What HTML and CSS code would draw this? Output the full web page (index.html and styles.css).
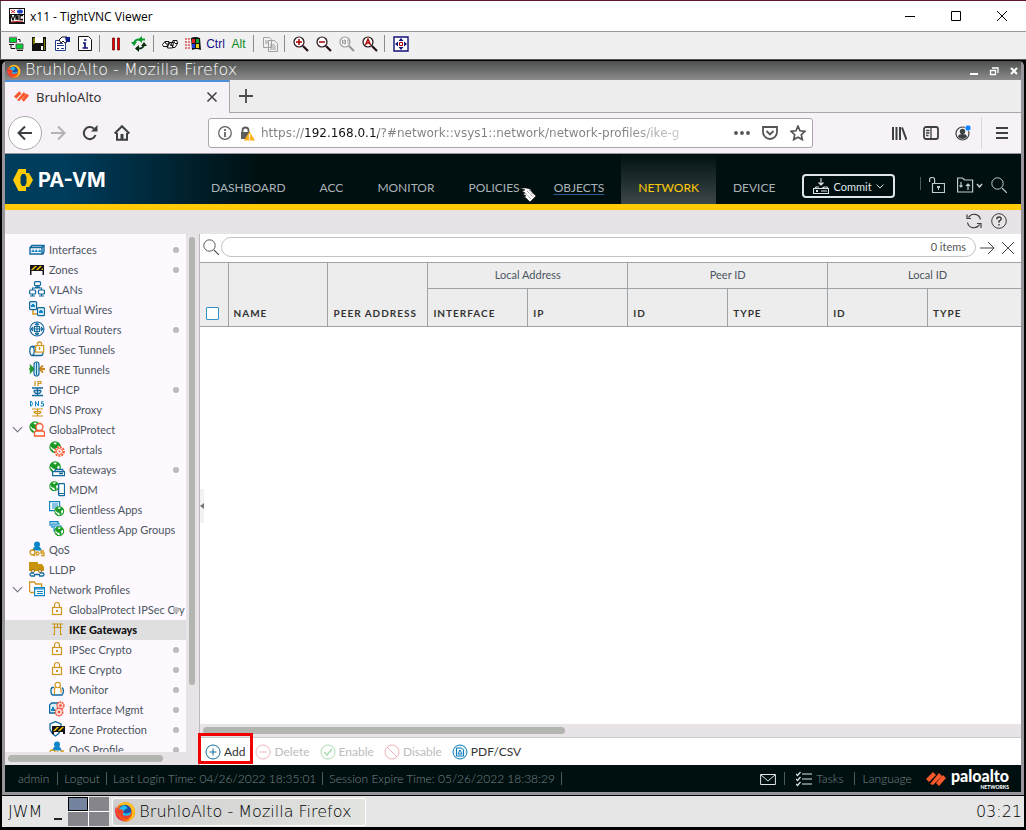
FILE: index.html
```html
<!DOCTYPE html>
<html lang="en">
<head>
<meta charset="utf-8">
<title>x11 - TightVNC Viewer</title>
<link rel="stylesheet" href="styles.css">
</head>
<body>
<svg class="defs" aria-hidden="true">
  <symbol id="firefox" viewBox="0 0 20 20"><circle cx="10" cy="10.500" r="9.200" fill="#f9690e"/><path d="M3 4q3-3 7-3 8 1 9 9 0 8-8 9 7-4 5-10-2-5-6-5-4 0-7 0z" fill="#ffc21c"/><circle cx="9.500" cy="9.500" r="6" fill="#1c4fa8"/><path d="M7 4q4 0 5 3-3 1-4 3 0 2 3 2 3 0 4-2 0 5-5 5-6 0-7-6 1-3 4-4z" fill="#20bcf0"/><path d="M1 6q2 2 5 2 3 1 2 3-2 3 2 3 3 0 5-1-1 5-7 4-6-3-7-11z" fill="#f0402a"/><path d="M1 5q-1 10 8 14-8 0-9-9 0-3 1-5z" fill="#e8304a"/></symbol>
  <symbol id="palo" viewBox="0 0 20 14"><g fill="#fa582d"><path d="M0 7 7 0l3 3-7 7zM4 12l9-11 3 3-9 9zM10 11l7-8 3 3-7 8z"/></g></symbol>
  <symbol id="globe" viewBox="0 0 16 16"><circle cx="7" cy="7" r="5.900" fill="#fff" stroke="#189a24" stroke-width="1.400"/><path d="M1.500 5Q3 1.500 6.500 1L5 3.500l3 .5 1-2.500q3 1 4 4L11 5 9 7.500l1.500 2L8 12.500 7 9 4 8.500z" fill="#189a24"/><path d="M2 9.500 4 11l1 2" stroke="#189a24" stroke-width="1.400" fill="none"/></symbol>
  <symbol id="lock" viewBox="0 0 16 16"><g fill="none" stroke="#d0981c" stroke-width="1.200"><rect x="3.500" y="6.500" width="9" height="7"/><path d="M5.500 6V4a2.500 2.500 0 0 1 5 0v2"/></g><path d="M7 9h2v2H7z" fill="#d0981c"/></symbol>
  <symbol id="ifc" viewBox="0 0 16 16"><path d="M1 13V6.500l2-2h12v6l-1 2.500zM1 6.500h12V13M13 6.500l2-2" fill="none" stroke="#106a9c" stroke-width="1.400"/><path d="M2.500 11h3V9.500h-1v-1h-1v1h-1zM6 11h2.500V9.500h-.700v-1h-1v1H6zM9.300 11h3V9.500h-1v-1h-1v1h-1z" fill="#0d85c6"/></symbol>
  <symbol id="zone" viewBox="0 0 16 16"><path d="M1 4h14v10h-1.500v-4h-11v4H1z" fill="#15151d"/><path d="M2 9l4-4h2L4 9zM7 9l4-4h2L9 9zM12 9l2-2v2z" fill="#ffcb06"/></symbol>
  <symbol id="vlan" viewBox="0 0 16 16"><g fill="none" stroke="#106a9c" stroke-width="1.200"><rect x="5.500" y=".6" width="6" height="4" rx="1"/><rect x=".6" y="9" width="6" height="4" rx="1"/><rect x="9.500" y="9" width="6" height="4" rx="1"/><path d="M6 6h5M8.500 5v2M3.500 9V7h9v2M1 15h5M10 15h5M3.500 13v2M12.500 13v2"/></g></symbol>
  <symbol id="vwire" viewBox="0 0 16 16"><path d="M4 9v4h7" fill="none" stroke="#d0981c" stroke-width="1.500"/><g fill="#d7edf8" stroke="#106a9c" stroke-width="1.200"><rect x=".6" y=".6" width="7" height="8" rx="1"/><rect x="8.500" y="6.600" width="7" height="8" rx="1"/></g><path d="M2 4h1V3h2v1h1v2H2zM10 10h1V9h2v1h1v2h-4z" fill="#0d85c6"/></symbol>
  <symbol id="router" viewBox="0 0 16 16"><g fill="none" stroke="#106a9c" stroke-width="1.100"><circle cx="8" cy="8" r="7"/><path d="M8 2v12M2 8h12M6 4l2-2 2 2M6 12l2 2 2-2M4 6 2 8l2 2M12 6l2 2-2 2M5.500 5.500h5v5h-5z"/></g></symbol>
  <symbol id="ipsec" viewBox="0 0 16 16"><g fill="none" stroke="#106a9c" stroke-width="1.300"><ellipse cx="3" cy="10" rx="2.200" ry="4.500"/><path d="M3 14.500h9q2 0 2-3M3 5.500h3"/></g><rect x="6.600" y="4.600" width="8" height="6.500" fill="#fff" stroke="#d0981c" stroke-width="1.200"/><path d="M8.500 4V2q2-2 4 0v2M10.500 6v3M9.500 7h2" fill="none" stroke="#d0981c" stroke-width="1.200"/></symbol>
  <symbol id="gre" viewBox="0 0 16 16"><path d="M0 8h3M1.500 4.500 5 8l-3.500 3.500z" stroke="#2d9b33" stroke-width="1.400" fill="#2d9b33"/><path d="M11 8h5M14 4.500 10.500 8l3.500 3.500" stroke="#c88a20" stroke-width="1.800" fill="none"/><rect x="5" y="1" width="5" height="14" rx="2.500" fill="#c9e6f5" stroke="#106a9c" stroke-width="1.200"/><path d="M7.500 2v12" stroke="#106a9c"/></symbol>
  <symbol id="dhcp" viewBox="0 0 16 16"><path d="M6 0v5M9 5V.500h3v2H9" stroke="#d0981c" stroke-width="1.200" fill="none"/><path d="M3 7h11M5 9.500h7M8.500 7v7M3 14.500h11M5 9.500q0 3 3.500 3t3.500-3" stroke="#106a9c" stroke-width="1.300" fill="none"/></symbol>
  <symbol id="dns" viewBox="0 0 16 16"><path d="M1.500 0v5h1q2-2.500 0-4.500zM6.500 5.500V.500l3 4.500V0M14.500.700h-2v2h2v2.300h-3" stroke="#0d85c6" fill="none"/><path d="M3 8h11M5 10.500h7M8.500 8v7M3 15h11M5 10.500q0 2 3.500 2t3.500-2" stroke="#d0981c" stroke-width="1.200" fill="none"/></symbol>
  <symbol id="gp" viewBox="0 0 16 16"><use href="#globe" width="14" height="14"/><g fill="#fff" stroke="#fa582d" stroke-width="1.300"><path d="M5.500 15v-3q0-2 2-2h6q2 0 2 2v3z"/><circle cx="10.500" cy="6" r="3.500"/></g></symbol>
  <symbol id="portal" viewBox="0 0 16 16"><use href="#globe" width="14" height="14"/><circle cx="10.500" cy="10.500" r="4.500" fill="#fff" stroke="#fa582d" stroke-width="1.700" stroke-dasharray="2 1"/><circle cx="10.500" cy="10.500" r="3" fill="none" stroke="#fa582d"/><circle cx="10.500" cy="10.500" r="1" fill="#fa582d"/></symbol>
  <symbol id="gateway" viewBox="0 0 16 16"><use href="#globe" width="14" height="14"/><path d="M3.600 10.600h12v4h-12zM5.500 10.500l1-2h7l1 2M10 12.500h4" fill="#fff" stroke="#106a9c" stroke-width="1.300"/></symbol>
  <symbol id="mdm" viewBox="0 0 16 16"><use href="#globe" width="12" height="12"/><rect x="9.600" y="2.600" width="6" height="12" rx="1" fill="#fff" stroke="#106a9c" stroke-width="1.400"/><path d="M10 12.500h5" stroke="#106a9c"/></symbol>
  <symbol id="capps" viewBox="0 0 16 16"><path d="M.600.600h10v9h-10zM3 3h6M3 5h6M3 7h6" fill="#fff" stroke="#0d85c6" stroke-width="1.200"/><use href="#globe" x="5" y="5" width="12" height="12"/></symbol>
  <symbol id="cgroups" viewBox="0 0 16 16"><path d="M1 5V.600h8V3M3 7V3h8M5 5h7v5H5z" fill="#d7edf8" stroke="#0d85c6" stroke-width="1.200"/><use href="#globe" x="5" y="5" width="12" height="12"/></symbol>
  <symbol id="qos" viewBox="0 0 16 16"><circle cx="8" cy="3.500" r="3" fill="#0d85c6"/><path d="M5 6h6l2 3.500H3z" fill="#0d85c6"/><g fill="none" stroke="#d0981c" stroke-width="1.300"><circle cx="3.500" cy="11.500" r="2.500"/><circle cx="8.500" cy="12.500" r="1.500"/><path d="m4 13 2 2M15 10h-3v2h3v2.500h-3"/></g></symbol>
  <symbol id="lldp" viewBox="0 0 16 16"><path d="M0 1h9v2h4l2 3v4H0z" fill="#c8930d"/><g fill="#fff" stroke="#9a6b00"><circle cx="4" cy="10" r="1.500"/><circle cx="11" cy="10" r="1.500"/></g><path d="M5 12H2q-2 1.500 0 3h4M11 12h3q2 1.500 0 3h-4M5 13.500h6" fill="none" stroke="#106a9c" stroke-width="1.300"/></symbol>
  <symbol id="profiles" viewBox="0 0 16 16"><path d="M.600 11V1h5l1 2h6v3M1 11.500h4" fill="none" stroke="#d0981c" stroke-width="1.300"/><path d="M5.600 6.600h10v8h-10zM6 8h9M8 10.500h6M8 12.500h6" fill="#fff" stroke="#0d85c6" stroke-width="1.200"/></symbol>
  <symbol id="torii" viewBox="0 0 16 16"><path d="M3 3h11M4 6.500h9M5.500 3v11M11.500 3v11M4 13.500h2M11 13.500h2M8.500 3v3" fill="none" stroke="#c8930d"/></symbol>
  <symbol id="monitor" viewBox="0 0 16 16"><path d="M5 6.500H3.500Q2 6.500 2 10t1.500 4H13q1.500-2 1.500-4T13 6.500" fill="none" stroke="#106a9c" stroke-width="1.300"/><path d="M5.500 13V8.500Q5.500 6 8 6h1.500Q12 6 12 8.500V12" fill="#fff" stroke="#d0981c" stroke-width="1.200"/><circle cx="8.700" cy="4" r="2.700" fill="#fff" stroke="#d0981c" stroke-width="1.200"/></symbol>
  <symbol id="imgmt" viewBox="0 0 16 16"><path d="M.600 12V4l2-2h7v10z" fill="#d7edf8" stroke="#106a9c" stroke-width="1.300"/><path d="M2 8h1V6h2v2h1v2H2z" fill="#0d85c6"/><g fill="#ffd9d0" stroke="#f0513c" stroke-width="1.300" stroke-dasharray="2 .5"><circle cx="11.500" cy="4.500" r="3.500"/><circle cx="10" cy="11" r="3.800"/></g><circle cx="11.500" cy="4.500" r="1.300" fill="#f0513c"/><circle cx="10" cy="11" r="1.300" fill="#f0513c"/></symbol>
  <symbol id="zprot" viewBox="0 0 16 16"><path d="M6.500.600 1 3v5q1 4 5.500 7Q11 12 12 8V3z" fill="#fff" stroke="#106a9c" stroke-width="1.300"/><path d="M3 5h13v8h-2v-2H5v2H3z" fill="#15151d"/><path d="M4 10l4-4h2l-4 4zM9 10l4-4h2l-4 4z" fill="#ffcb06"/></symbol>
  <symbol id="search" viewBox="0 0 16 16"><circle cx="6.500" cy="6.500" r="5.700" fill="none" stroke="currentColor"/><path d="m11 11 5 5" stroke="currentColor" stroke-width="1.200"/></symbol>
  <symbol id="mag" viewBox="0 0 16 16"><circle cx="6" cy="6" r="5" fill="#fff" stroke="currentColor" stroke-width="1.200"/><path d="m10 10 5 5" stroke="currentColor" stroke-width="2.200"/></symbol>
</svg>

<header class="vnc-title">
  <svg class="vnc-logo" viewBox="0 0 16 16"><path d="M0 0h16v16H0z" fill="#111"/><path d="M1 1h14v5H1zM2 7h13v7H2z" fill="#fff"/><path d="m2 2 4 3M6 2 2 5M2 14l12-1" stroke="#d02020"/><ellipse cx="11" cy="3.500" rx="3" ry="2" fill="#2040c0"/><path d="m2 7 2 5 2-5M7 12V7l2 5V7M14 7.500h-3v4h3" stroke="#111" fill="none" stroke-width="1.300"/></svg>
  <h1>x11 - TightVNC Viewer</h1>
  <div class="win-buttons">
    <button aria-label="Minimize"><svg viewBox="0 0 12 12"><path d="M1 6.500h10" stroke="#000"/></svg></button>
    <button aria-label="Maximize"><svg viewBox="0 0 12 12"><path d="M1.500 1.500h9v9h-9z" stroke="#000" fill="none"/></svg></button>
    <button aria-label="Close"><svg viewBox="0 0 12 12"><path d="m1 1 10 10M11 1 1 11" stroke="#000"/></svg></button>
  </div>
</header>

<div class="vnc-tools" role="toolbar">
  <button aria-label="New connection"><svg viewBox="0 0 16 16"><path d="M1.500 1.500h7v5h-7zM8 8h7v5H8z" fill="#00d030" stroke="#555"/><path d="M1 1h8M8 7.500h7" stroke="#aaa"/><path d="M3 8.500v4h4M12 6V3.500h-2M1 8.500h5M9 14.500h6" stroke="#111" fill="none"/></svg></button>
  <button aria-label="Save"><svg viewBox="0 0 16 16"><path d="M1 1h14v14H1z" fill="#111"/><path d="M2 2h2v6H2z" fill="#808000"/><path d="M4 1h8v6H4zM10 10h2v4h-2z" fill="#fff"/><path d="M13 3h1v11h-1z" fill="#808000"/></svg></button>
  <button aria-label="Options"><svg viewBox="0 0 16 16"><path d="M1.500 4.500h10v10h-10z" fill="#fff" stroke="#223a8a"/><path d="M3 7.500h6M3 9.500h7M3 12.500h2M7 12.500h3" stroke="#223a8a"/><path d="m5 4 3-3h5v5l-2 1-2-2-2 2z" fill="#fff" stroke="#111"/><path d="M11 1h5v5h-4z" fill="#10228a"/></svg></button>
  <button aria-label="Connection info"><svg viewBox="0 0 16 16"><path d="M1.500.500h10l3 3v11h-13z" fill="#fff" stroke="#111"/><path d="M6 7h2v4.500M5.500 12h5.500M7 4h2.500" stroke="#10107a" stroke-width="1.700" fill="none"/></svg></button>
  <i class="sep"></i>
  <button aria-label="Pause"><svg viewBox="0 0 16 16"><path d="M4.500 2h2v12h-2zM9.500 2h2v12h-2z" fill="#e80000" stroke="#600" stroke-width=".7"/></svg></button>
  <button aria-label="Refresh"><svg viewBox="0 0 16 16"><path d="M3 7q1-3.500 5-3.500h6" stroke="#0a9a30" stroke-width="1.800" fill="none"/><path d="M0 6h6L3 10zM11 0 7 3.500 11 7z" fill="#0a9a30"/><path d="M13 9q-1 3.500-5 3.500H5" stroke="#063010" stroke-width="1.800" fill="none"/><path d="M16 10h-6l3-4zM8 9l-4 3.500L8 16z" fill="#063010"/></svg></button>
  <i class="sep"></i>
  <button aria-label="Ctrl-Alt-Del"><svg viewBox="0 0 16 16"><path d="M.500 8.500 3 5.500h4l-1 5H1.500zM5 10l2.500-3.500h4L10.500 12h-5zM9.500 8 11 4.500h4l.500 3-2.500 4h-2z" fill="#fff" stroke="#111"/><path d="m3 5.500 1 2.500h2M7.500 6.500l1 3h2.500M11.500 4.500l1.500 3h2.500" stroke="#111" fill="none"/></svg></button>
  <button aria-label="Ctrl-Esc"><svg viewBox="0 0 16 16"><path d="M0 3h5M0 6h5M0 9h5M0 12h5" stroke="#c00" stroke-dasharray="2 1"/><path d="M6 2q4-2 9 0l1 12q-5-2-9 0z" fill="#111"/><path d="M7 3h3v4H7z" fill="#e02020"/><path d="M11 3h3v4h-3z" fill="#18a030"/><path d="M7 8h3v4H7z" fill="#2040e0"/><path d="M11 8h3v4h-3z" fill="#e8d020"/></svg></button>
  <button class="key ctrl">Ctrl</button>
  <button class="key alt">Alt</button>
  <i class="sep"></i>
  <button aria-label="Transfer files"><svg viewBox="0 0 16 16"><path d="M1.500 1.500h6l2 2v8h-8zM6.500 4.500h6l3 3v8h-9zM8 9h5M8 11h6M8 13h6M3 5h3M3 7h3" fill="none" stroke="#a0a0a0"/></svg></button>
  <i class="sep"></i>
  <button aria-label="Zoom in"><svg class="wine" viewBox="0 0 16 16"><use href="#mag"/><path d="M3 6h6M6 3v6" stroke="#a00" stroke-width="1.500"/></svg></button>
  <button aria-label="Zoom out"><svg class="wine" viewBox="0 0 16 16"><use href="#mag"/><path d="M3 6h6" stroke="#a00" stroke-width="1.500"/></svg></button>
  <button aria-label="Zoom 100%"><svg class="off" viewBox="0 0 16 16"><use href="#mag"/><path d="M3.500 4v4M5 4h1.500v4H5zM8 4h1v4" stroke="#999" fill="none"/></svg></button>
  <button aria-label="Auto scale"><svg class="wine" viewBox="0 0 16 16"><use href="#mag"/><path d="m3.500 9 2.500-6 2.500 6M4.500 7h3" stroke="#a00" stroke-width="1.400" fill="none"/></svg></button>
  <i class="sep"></i>
  <button aria-label="Full screen"><svg viewBox="0 0 16 16"><path d="M1 1h14v14H1z" fill="#fff" stroke="#10107a" stroke-width="1.400"/><path d="M8 2 5.500 5h5zM8 14l-2.500-3h5zM2 8l3-2.500v5zM14 8l-3-2.500v5z" fill="#10107a"/><path d="M6.500 6.500h3v3h-3z" fill="#fff" stroke="#a00"/></svg></button>
</div>

<div class="desktop">
  <section class="firefox">
    <header class="ff-title">
      <svg class="ff-logo"><use href="#firefox"/></svg>
      <h2>BruhloAlto - Mozilla Firefox</h2>
      <div class="ff-buttons">
        <button aria-label="Minimize"><svg viewBox="0 0 10 10"><path d="M1 8h8" stroke="#fff" stroke-width="2"/></svg></button>
        <button aria-label="Restore"><svg viewBox="0 0 10 10"><path d="M1.500 4.500h5v4h-5zM3 2h6v5" stroke="#fff" stroke-width="1.300" fill="none"/></svg></button>
        <button aria-label="Close"><svg viewBox="0 0 10 10"><path d="m2 2 6 6M8 2 2 8" stroke="#fff" stroke-width="2"/></svg></button>
      </div>
    </header>

    <div class="tabs">
      <div class="tab">
        <svg class="fav"><use href="#palo"/></svg>
        <span>BruhloAlto</span>
        <button aria-label="Close tab"><svg viewBox="0 0 12 12"><path d="m1.500 1.500 9 9M10.500 1.500l-9 9" stroke="#444" stroke-width="1.600"/></svg></button>
      </div>
      <button class="newtab" aria-label="New tab"><svg viewBox="0 0 14 14"><path d="M7 0v14M0 7h14" stroke="#4a4a4a" stroke-width="1.800"/></svg></button>
    </div>

    <div class="ff-nav">
      <div class="nav-left">
        <button class="back" aria-label="Back"><svg viewBox="0 0 16 16"><path d="M15 8H2M8 1.500 1.500 8 8 14.500" fill="none" stroke="#3c4043" stroke-width="2"/></svg></button>
        <button aria-label="Forward"><svg viewBox="0 0 16 16"><path d="M1 8h13M8 1.500 14.500 8 8 14.500" fill="none" stroke="#b5b2b5" stroke-width="2"/></svg></button>
        <button aria-label="Reload"><svg viewBox="0 0 16 16"><path d="M13.500 10A6 6 0 1 1 12 3.800" fill="none" stroke="#3c4043" stroke-width="2"/><path d="M9 6.500h6.500V0z" fill="#3c4043"/></svg></button>
        <button aria-label="Home"><svg viewBox="0 0 16 16"><path d="M.700 8.500 8 1.200l7.300 7.300M3 8v6.800h10V8" fill="none" stroke="#3c4043" stroke-width="2"/><path d="M6.500 15V9h3v6z" fill="#3c4043"/></svg></button>
      </div>
      <div class="urlbar">
        <svg viewBox="0 0 14 14"><circle cx="7" cy="7" r="6.300" fill="none" stroke="#5c5c5c" stroke-width="1.200"/><path d="M7 6v5M7 3v2" stroke="#5c5c5c" stroke-width="1.700"/></svg>
        <svg class="warn" viewBox="0 0 15 15"><path d="M2.500 7V4.500a3 3 0 0 1 6 0V7" fill="none" stroke="#5c5c5c" stroke-width="1.800"/><path d="M1 6h9v7H1z" fill="#5c5c5c"/><path d="m9.500 5.500 5.500 9H4z" fill="#ffae17"/><path d="M9.500 8v3.500M9.500 12.300v1.400" stroke="#fff" stroke-width="1.300"/></svg>
        <input class="url" type="text" aria-label="Address" value="https://192.168.0.1/?#network::vsys1::network/network-profiles/ike-g">
        <button aria-label="Page actions"><svg viewBox="0 0 16 16"><g fill="#555"><circle cx="2" cy="8" r="1.900"/><circle cx="8" cy="8" r="1.900"/><circle cx="14" cy="8" r="1.900"/></g></svg></button>
        <button aria-label="Save to Pocket"><svg viewBox="0 0 16 16"><path d="M1 2h14v5a7 7 0 0 1-14 0zM4.500 6 8 9.500 11.500 6" fill="none" stroke="#555" stroke-width="1.800"/></svg></button>
        <button aria-label="Bookmark"><svg viewBox="0 0 16 16"><path d="m8 1.200 2 4.600 5 .5-3.700 3.400 1 4.900L8 12.200l-4.300 2.400 1-4.900L1 6.300l5-.5z" fill="none" stroke="#555" stroke-width="1.700"/></svg></button>
      </div>
      <div class="nav-right">
        <button aria-label="Library"><svg viewBox="0 0 16 16"><path d="M2 2v13M5.500 2v13M9 2v13M11 2.500l4.500 12.300" stroke="#3c4043" stroke-width="2"/></svg></button>
        <button aria-label="Sidebars"><svg viewBox="0 0 16 16"><rect x="1" y="2" width="14" height="12" rx="2" fill="none" stroke="#3c4043" stroke-width="1.800"/><path d="M8 2v12M3 5.500h3.500M3 8h3.500M3 10.500h2.500" stroke="#3c4043" stroke-width="1.300"/></svg></button>
        <button aria-label="Account"><svg viewBox="0 0 16 16"><circle cx="7.500" cy="8.500" r="6.500" fill="none" stroke="#3c4043" stroke-width="1.200"/><circle cx="7.500" cy="6.500" r="2.700" fill="#3c4043"/><path d="M3 12q0-3 4.500-3T12 12q-4.500 4-9 0z" fill="#3c4043"/><circle cx="13" cy="3" r="3" fill="#0a84ff" stroke="#f6f2f6" stroke-width=".7"/></svg></button>
        <button class="menu" aria-label="Menu"><svg viewBox="0 0 16 16"><path d="M2 3h12M2 8h12M2 13h12" stroke="#3c4043" stroke-width="2"/></svg></button>
      </div>
    </div>

    <div class="pan">
      <header class="pan-head">
        <div class="brand">
          <svg viewBox="0 0 20 22"><path fill-rule="evenodd" d="M5.500 0H13v4h3l4 7-4 7h-3v4H5.500L0 11zM9 5 7.500 8v6L9 17h3l1.500-3V8L12 5z" fill="#ffcb06"/></svg>
          <strong>PA-VM</strong>
        </div>
        <nav class="pan-nav">
          <a href="#dashboard">DASHBOARD</a><a href="#acc">ACC</a><a href="#monitor">MONITOR</a>
          <a href="#policies">POLICIES<svg class="pointer" viewBox="0 0 16 16"><path d="m0 2 6 0 4 1 2 3 4 4-6 6-4-4-2-1 2-1-3-2 2-1-3-2 3-1z" fill="#fff" stroke="#111" stroke-width=".6"/><path d="m7 5 6 6M5 7l6 6M9 4l5 6" stroke="#333" stroke-width=".7" stroke-dasharray="1 1"/></svg></a>
          <a class="hover" href="#objects">OBJECTS</a><a class="on" href="#network">NETWORK</a><a href="#device">DEVICE</a>
        </nav>
        <button class="commit"><svg viewBox="0 0 16 16"><path d="M8 0v7M5.500 4.500 8 7l2.500-2.500M.500 10.500h15v5H.500zM2 10.500 3 9h3M9 10.500l2-1.500h3l1 1.500M8 13h6" fill="none" stroke="#dfe5e8" stroke-width="1.100"/><path d="M3 12h2v2H3z" fill="#dfe5e8"/></svg>Commit<svg class="caret" viewBox="0 0 8 5"><path d="m.500.500 3.500 3.500 3.500-3.500" fill="none" stroke="#dfe5e8"/></svg></button>
        <div class="head-tools">
          <i class="bar"></i>
          <button aria-label="Locks"><svg viewBox="0 0 16 16"><path d="M3.500 6.500h12v9h-12zM.600 5V2.500q0-2 2.500-2t2.500 2v4" fill="none" stroke="#c3cacd" stroke-width="1.200"/><path d="M8 9h3v2H8zM9 11h1v2H9z" fill="#c3cacd"/></svg></button>
          <button class="wide" aria-label="Configuration"><svg viewBox="0 0 26 16"><path d="M.600 15V1h5l2 2h8v12zM4 5v5M2.500 8.500 4 10l1.500-1.500M11 13V7M9 9l2-2 2 2" fill="none" stroke="#c3cacd" stroke-width="1.200"/><path d="m20 7 2.500 3L25 7" fill="none" stroke="#c3cacd" stroke-width="1.600"/></svg></button>
          <button class="find" aria-label="Search"><svg><use href="#search"/></svg></button>
        </div>
      </header>

      <div class="pan-band">
        <button aria-label="Refresh"><svg viewBox="0 0 16 16"><path d="M1.500 9.500a6.500 6.500 0 0 0 12 2M14.500 6.500a6.500 6.500 0 0 0-12-2M1 1.500v4h4M15 15v-4.500h-4" fill="none" stroke="#3b3b3b" stroke-width="1.200"/></svg></button>
        <button aria-label="Help"><svg viewBox="0 0 16 16"><circle cx="8" cy="8" r="7.300" fill="none" stroke="#3b3b3b"/><path d="M5.800 6.200q0-2.200 2.200-2.200t2.200 2Q10.200 7.200 8 8.200v1.500M8 11v1.500" fill="none" stroke="#3b3b3b" stroke-width="1.400"/></svg></button>
      </div>

      <div class="work">
        <aside class="side">
          <div class="tree-wrap">
            <ul class="tree">
              <li class="dot"><a href="#interfaces"><svg><use href="#ifc"/></svg>Interfaces</a></li>
              <li class="dot"><a href="#zones"><svg><use href="#zone"/></svg>Zones</a></li>
              <li><a href="#vlans"><svg><use href="#vlan"/></svg>VLANs</a></li>
              <li><a href="#virtual-wires"><svg><use href="#vwire"/></svg>Virtual Wires</a></li>
              <li class="dot"><a href="#virtual-routers"><svg><use href="#router"/></svg>Virtual Routers</a></li>
              <li><a href="#ipsec-tunnels"><svg><use href="#ipsec"/></svg>IPSec Tunnels</a></li>
              <li><a href="#gre-tunnels"><svg><use href="#gre"/></svg>GRE Tunnels</a></li>
              <li class="dot"><a href="#dhcp-servers"><svg><use href="#dhcp"/></svg>DHCP</a></li>
              <li><a href="#dns-proxy"><svg><use href="#dns"/></svg>DNS Proxy</a></li>
              <li class="open"><a href="#globalprotect"><svg><use href="#gp"/></svg>GlobalProtect</a></li>
              <li class="sub"><a href="#portals"><svg><use href="#portal"/></svg>Portals</a></li>
              <li class="sub dot"><a href="#gateways"><svg><use href="#gateway"/></svg>Gateways</a></li>
              <li class="sub"><a href="#mdm-servers"><svg><use href="#mdm"/></svg>MDM</a></li>
              <li class="sub"><a href="#clientless-apps"><svg><use href="#capps"/></svg>Clientless Apps</a></li>
              <li class="sub"><a href="#clientless-app-groups"><svg><use href="#cgroups"/></svg>Clientless App Groups</a></li>
              <li><a href="#qos-interfaces"><svg><use href="#qos"/></svg>QoS</a></li>
              <li><a href="#lldp-settings"><svg><use href="#lldp"/></svg>LLDP</a></li>
              <li class="open"><a href="#network-profiles"><svg><use href="#profiles"/></svg>Network Profiles</a></li>
              <li class="sub dot"><a href="#gp-ipsec-crypto"><svg><use href="#lock"/></svg>GlobalProtect IPSec Cry</a></li>
              <li class="sub current"><a href="#ike-gateways"><svg><use href="#torii"/></svg>IKE Gateways</a></li>
              <li class="sub dot"><a href="#ipsec-crypto"><svg><use href="#lock"/></svg>IPSec Crypto</a></li>
              <li class="sub dot"><a href="#ike-crypto"><svg><use href="#lock"/></svg>IKE Crypto</a></li>
              <li class="sub dot"><a href="#monitor-profiles"><svg><use href="#monitor"/></svg>Monitor</a></li>
              <li class="sub dot"><a href="#interface-mgmt"><svg><use href="#imgmt"/></svg>Interface Mgmt</a></li>
              <li class="sub dot"><a href="#zone-protection"><svg><use href="#zprot"/></svg>Zone Protection</a></li>
              <li class="sub dot"><a href="#qos-profile"><svg><use href="#qos"/></svg>QoS Profile</a></li>
            </ul>
            <div class="vtrack"><div class="vthumb"></div></div>
          </div>
          <div class="htrack"><div class="hthumb"></div></div>
        </aside>

        <main class="main">
          <button class="collapse" aria-label="Collapse sidebar"></button>
          <div class="filter">
            <svg><use href="#search"/></svg>
            <div class="filter-box"><input type="text" aria-label="Filter"><span>0 items</span></div>
            <button aria-label="Apply filter"><svg viewBox="0 0 16 16"><path d="M1 9h14M9 3l6 6-6 6" fill="none" stroke="#444"/></svg></button>
            <button aria-label="Clear filter"><svg viewBox="0 0 16 16"><path d="m2 3 12 12M14 3 2 15" fill="none" stroke="#444"/></svg></button>
          </div>
          <div class="grid">
            <table>
              <colgroup><col class="c-check"><col span="8"></colgroup>
              <thead>
                <tr><th rowspan="2" class="check"><input type="checkbox" aria-label="Select all"></th><th rowspan="2">NAME</th><th rowspan="2">PEER ADDRESS</th><th colspan="2" class="group">Local Address</th><th colspan="2" class="group">Peer ID</th><th colspan="2" class="group">Local ID</th></tr>
                <tr><th>INTERFACE</th><th>IP</th><th>ID</th><th>TYPE</th><th>ID</th><th>TYPE</th></tr>
              </thead>
            </table>
          </div>
          <div class="gtrack"><div class="gthumb"></div></div>
          <div class="actions">
            <button class="add"><svg viewBox="0 0 16 16"><circle cx="8" cy="8" r="7" fill="none" stroke="#106a9c"/><path d="M8 4.500v7M4.500 8h7" stroke="#106a9c"/></svg>Add</button>
            <button disabled><svg viewBox="0 0 16 16"><circle cx="8" cy="8" r="7" fill="none" stroke="#f3b4ba"/><path d="M4.500 8h7" stroke="#f3b4ba"/></svg>Delete</button>
            <button disabled><svg viewBox="0 0 16 16"><circle cx="8" cy="8" r="7" fill="none" stroke="#a9dcb0"/><path d="m4.500 8 2.500 3 5-6" stroke="#a9dcb0" stroke-width="1.500" fill="none"/></svg>Enable</button>
            <button disabled><svg viewBox="0 0 16 16"><circle cx="8" cy="8" r="7" fill="none" stroke="#f3b4ba"/><path d="m3 3 10 10" stroke="#f3b4ba"/></svg>Disable</button>
            <button><svg viewBox="0 0 16 16"><circle cx="8" cy="8" r="7" fill="#e6f3fa" stroke="#0d7ab5"/><path d="M4.500 4h5l2 2v6h-7zM6 10l2-4 2 4z" fill="none" stroke="#0d7ab5"/></svg>PDF/CSV</button>
          </div>
        </main>
      </div>

      <footer class="pan-foot">
        <span class="user">admin</span><a href="#logout">Logout</a><span>Last Login Time: 04/26/2022 18:35:01</span><span class="last">Session Expire Time: 05/26/2022 18:38:29</span>
        <div class="foot-right">
          <button aria-label="Messages"><svg viewBox="0 0 16 16"><path d="M.600 3.500h14.800v10H.600zM1 4l7 6 7-6" fill="none" stroke="#dfe5e8"/></svg></button>
          <i class="bar"></i>
          <button class="tasks"><svg viewBox="0 0 16 16"><path d="M6 3h10M6 8h10M6 13h10M0 3l1.500 1.500L4.500 1M0 8l1.500 1.500L4.500 6M0 13l1.500 1.500L4.500 11" fill="none" stroke="#dfe5e8" stroke-width="1.200"/></svg>Tasks</button>
          <i class="bar"></i>
          <a href="#language">Language</a>
          <div class="palo"><svg><use href="#palo"/></svg><div><b>paloalto</b><small>NETWORKS</small></div></div>
        </div>
      </footer>
    </div>
  </section>

  <footer class="taskbar">
    <button class="jwm">JWM</button>
    <button class="showdesk" aria-label="Show desktop"></button>
    <div class="pager"><i class="here"></i><i></i><i></i><i></i></div>
    <button class="task"><svg><use href="#firefox"/></svg>BruhloAlto - Mozilla Firefox</button>
    <time>03:21</time>
  </footer>
</div>
</body>
</html>
```

FILE: styles.css
```css
* { box-sizing: border-box; }
body {
  margin: 0;
  height: 100vh;
  display: flex;
  flex-direction: column;
  overflow: hidden;
  border-top: 1px solid #5c1630;
  background: #222;
  font-family: Lato, "Open Sans", sans-serif;
  font-size: 11px;
}
button { border: 0; padding: 0; margin: 0; background: none; font: inherit; color: inherit; display: flex; align-items: center; justify-content: center; flex: none; }
svg { width: 16px; height: 16px; flex: none; display: block; }
a { color: inherit; text-decoration: none; }
h1, h2 { margin: 0; font-weight: 400; }
.defs { position: absolute; width: 0; height: 0; }

/* viewer window */
.vnc-title { height: 30px; flex: none; display: flex; align-items: center; padding: 0 1px 0 8px; background: #fff; border-left: 1px solid #555; }
.vnc-title h1 { flex: 1; margin-left: 5px; font: 12px "Open Sans", sans-serif; color: #000; }
.win-buttons { display: flex; }
.win-buttons button { width: 46px; height: 28px; }
.win-buttons svg { width: 12px; height: 12px; }
.vnc-tools { height: 29px; flex: none; display: flex; align-items: center; padding: 0 0 4px 3px; background: #f0f0f0; border-top: 1px solid #999; border-left: 1px solid #555; border-bottom: 1px solid #555; }
.vnc-tools button { width: 23px; height: 22px; }
.sep { width: 1px; height: 17px; margin: 0 4px 0 3px; background: #8c8c8c; }
.vnc-tools .key { font: 12px "Liberation Sans", sans-serif; color: #10108c; }
.vnc-tools .alt { color: #0a8a1e; }
.wine { color: #251018; }
.off { color: #999; }

.desktop { flex: 1; min-height: 0; display: flex; flex-direction: column; padding: 1px 2px 3px 2px; background: #000; }
.firefox { flex: 1; min-height: 0; display: flex; flex-direction: column; border: solid #98959a; border-width: 0 3px 3px 3px; border-radius: 5px 5px 0 0; margin-bottom: 1px; background: #98959a; }
.ff-title { height: 19px; flex: none; display: flex; align-items: center; padding-left: 2px; background: linear-gradient(#4c504d, #8c8c8c); }
.ff-logo { width: 14px; height: 14px; }
.ff-title h2, .taskbar { font-family: "DejaVu Sans", sans-serif; font-weight: 200; font-size: 16px; }
.ff-title h2 { flex: 1; margin-left: 4px; padding-bottom: 2px; line-height: 17px; color: #fff; }
.ff-buttons { display: flex; gap: 10px; padding-right: 2px; }
.ff-buttons svg { width: 10px; height: 10px; }

.tabs { height: 33px; flex: none; display: flex; background: #ededed; border-bottom: 1px solid #aaa6aa; }
.tab { width: 225px; height: 33px; display: flex; align-items: center; padding: 0 11px 2px 9px; background: #f7f2f7; border-top: 2px solid #4a90d9; border-right: 1px solid #aaa6aa; font: 13px "Noto Sans", sans-serif; color: #333; }
.tab span { flex: 1; margin-left: 7px; }
.tab .fav { width: 15px; height: 11px; }
.tab button svg { width: 12px; height: 12px; }
.newtab { width: 32px; }
.newtab svg { width: 14px; height: 14px; }

.ff-nav { height: 41px; flex: none; display: flex; align-items: center; background: #f7f2f7; border-bottom: 1px solid #98959a; }
.nav-left { display: flex; width: 203px; padding-left: 3px; }
.nav-left button { width: 32px; height: 34px; }
.nav-left .back { width: 34px; border: 1px solid #aaa; border-radius: 50%; background: #fff; }
.urlbar { flex: 1; min-width: 0; height: 30px; display: flex; align-items: center; gap: 8px; padding: 0 4px 0 9px; border: 1px solid #aaa6aa; border-radius: 3px; background: #fff; }
.urlbar > svg { width: 14px; height: 14px; }
.urlbar .warn { width: 15px; height: 15px; margin-right: -2px; }
.urlbar button { width: 20px; }
.url {
  flex: 1; min-width: 0; border: 0; padding: 0; margin-right: 22px; outline: 0;
  font: 12px "DejaVu Sans", sans-serif; color: #777;
  background: linear-gradient(90deg, #808080 44px, #111 44px, #111 117px, #808080 117px, #808080 360px, #e8e8e8 100%);
  -webkit-background-clip: text; background-clip: text; -webkit-text-fill-color: transparent;
}
.nav-right { display: flex; margin-left: 70px; }
.nav-right button { width: 32px; height: 32px; }
.nav-right .menu { width: 40px; border-left: 1px solid #d8d4d8; margin-left: 2px; }

/* firewall console */
.pan { flex: 1; min-height: 0; display: flex; flex-direction: column; background: #fff; color: #4b5560; }
.pan-head { height: 56px; flex: none; display: flex; background: linear-gradient(90deg, #003c5c 60px, #000f0f 260px); border-bottom: 6px solid #ffcb06; }
.brand { width: 189px; display: flex; align-items: center; gap: 5px; padding: 2px 0 0 8px; color: #fff; }
.brand svg { width: 20px; height: 22px; }
.brand strong { font: 700 20px Inter, sans-serif; }
.pan-nav { display: flex; flex: 1; font-size: 12px; color: #a9b3b8; }
.pan-nav a { position: relative; padding: 26px 17px 0; line-height: 16px; }
.pan-nav .hover { text-decoration: underline #2a5a94; text-underline-offset: 2px; }
.pan-nav .on { color: #ffcb06; background: linear-gradient(#001010, #3c474a); }
.pointer { position: absolute; right: 1px; top: 32px; }
.commit { height: 24px; width: 93px; margin-top: 20px; gap: 4px; border: 2px solid #dfe5e8; border-radius: 4px; color: #dfe5e8; }
.commit .caret { width: 8px; height: 5px; }
.head-tools { display: flex; align-items: flex-start; gap: 8px; padding: 23px 14px 0 25px; color: #c3cacd; }
.bar { width: 1px; height: 13px; background: #4d5b5e; }
.wide svg { width: 26px; }
.head-tools .wide { margin-left: 4px; }

.pan-band { height: 24px; flex: none; display: flex; align-items: center; justify-content: flex-end; gap: 9px; padding: 0 14px 2px 0; background: #e8e3e6; }
.work { flex: 1; min-height: 0; display: flex; }
.side { width: 195px; flex: none; display: flex; flex-direction: column; border-right: 1px solid #bdb9bd; background: #e8e3e6; }
.tree-wrap { flex: 1; min-height: 0; display: flex; }
.tree { flex: 1; min-width: 0; margin: 0; padding: 6px 0 0; list-style: none; overflow: hidden; background: #fdf9ff; }
.tree li { position: relative; height: 20px; }
.tree a { display: flex; align-items: center; gap: 4px; height: 20px; padding: 0 0 2px 24px; white-space: nowrap; }
.tree .sub a { padding-left: 44px; }
.tree .current { background: #e0dfe0; font-weight: 900; color: #111; }
.dot::after { content: ""; position: absolute; right: 7px; top: 7px; width: 6px; height: 6px; border-radius: 50%; background: #bcb8bc; }
.open::before { content: ""; position: absolute; left: 9px; top: 4px; width: 6px; height: 6px; border: solid #66707a; border-width: 0 1px 1px 0; transform: rotate(45deg); }
.vtrack { width: 13px; padding: 3px 4px 0 3px; }
.vthumb { height: 87%; border-radius: 3px; background: #b3b5b1; }
.htrack { height: 13px; padding: 3px; }
.hthumb { width: 155px; height: 7px; border-radius: 4px; background: #b3b5b1; }

.main { position: relative; flex: 1; min-width: 0; display: flex; flex-direction: column; background: #fff; }
.collapse { position: absolute; left: 0; top: 255px; width: 4px; height: 34px; background: #f3f1f3; }
.collapse::after { content: ""; border: solid transparent; border-width: 3px 4px 3px 0; border-right-color: #777; }
.filter { height: 28px; flex: none; display: flex; align-items: center; gap: 5px; padding: 0 5px 2px 3px; color: #555; }
.filter-box { flex: 1; display: flex; align-items: center; height: 20px; padding: 0 9px 2px; margin: 0 -2px 0 -3px; border: 1px solid #c4c4c4; border-radius: 10px; }
.filter-box input { flex: 1; min-width: 0; border: 0; padding: 0; outline: 0; background: none; font: inherit; }
.grid { flex: 1; min-height: 0; overflow: hidden; }
table { width: 828px; min-width: 100%; table-layout: fixed; border-collapse: collapse; background: #ededed; }
.c-check { width: 28px; }
th { height: 38px; padding: 0 0 5px 5px; border: 1px solid #9da3a6; vertical-align: bottom; text-align: left; font-size: 10px; line-height: 16px; font-weight: 700; letter-spacing: 1px; color: #333; }
th:first-child.check { border-left: 0; padding: 0 0 6px 6px; }
th.group { height: 26px; padding: 0 0 2px; vertical-align: middle; text-align: center; font-size: 11px; font-weight: 400; letter-spacing: 0; color: #4b5560; }
.check input { appearance: none; display: block; width: 13px; height: 13px; margin: 0; border: 1px solid #2f93c6; border-radius: 1px; background: #fff; }
.gtrack { height: 14px; flex: none; padding: 3px; background: #e8e3e6; border-bottom: 1px solid #cbc8cb; }
.gthumb { width: 362px; height: 7px; border-radius: 4px; background: #b3b5b1; }
.actions { height: 27px; flex: none; display: flex; gap: 10px; padding-left: 5px; font-size: 12px; color: #333; }
.actions button { gap: 3px; }
.actions button:disabled { color: #bcbcbc; }
.add { position: relative; }
.add::after { content: ""; position: absolute; left: -7px; right: -8px; top: -5px; bottom: 1px; border: 3px solid #f00000; }

.pan-foot { height: 27px; flex: none; display: flex; align-items: center; padding-left: 13px; background: #000f0f; color: #78878a; font-size: 12px; font-weight: 300; }
.pan-foot > a, .pan-foot > span:not(.user) { padding: 0 6px; border-left: 1px solid #4d5b5e; line-height: 13px; }
.pan-foot .user { margin-right: 8px; }
.pan-foot > .last { border-right: 1px solid #4d5b5e; }
.foot-right { margin-left: auto; display: flex; align-items: center; gap: 8px; padding-right: 12px; }
.foot-right button { gap: 4px; }
.foot-right .tasks { margin: 0 2px 0 3px; }
.palo { display: flex; align-items: center; gap: 5px; margin-left: 6px; color: #fff; }
.palo svg { width: 20px; height: 14px; }
.palo div { display: flex; flex-direction: column; align-items: flex-end; }
.palo b { font: 900 16px/16px Lato, sans-serif; }
.palo small { font: 900 5px/6px Lato, sans-serif; }

.taskbar { height: 31px; flex: none; display: flex; align-items: center; padding: 0 2px 0 6px; background: #e6e6e6; color: #000; }
.showdesk { width: 8px; height: 2px; margin: 14px 6px 0 12px; background: #222; }
.pager { display: grid; grid-template-columns: 20px 20px; grid-template-rows: 14px 14px; gap: 1px; background: #fff; }
.pager i { background: #85858b; }
.pager .here { background: #74839e; border: 1px solid #000; }
.task { height: 28px; width: 254px; justify-content: flex-start; gap: 3px; margin-left: 3px; padding-left: 2px; border: 1px solid #fff; border-radius: 3px; background: linear-gradient(90deg, #cfcfcf, #e2e4e0); }
.task svg { width: 21px; height: 21px; }
.taskbar time { margin-left: auto; }
```
